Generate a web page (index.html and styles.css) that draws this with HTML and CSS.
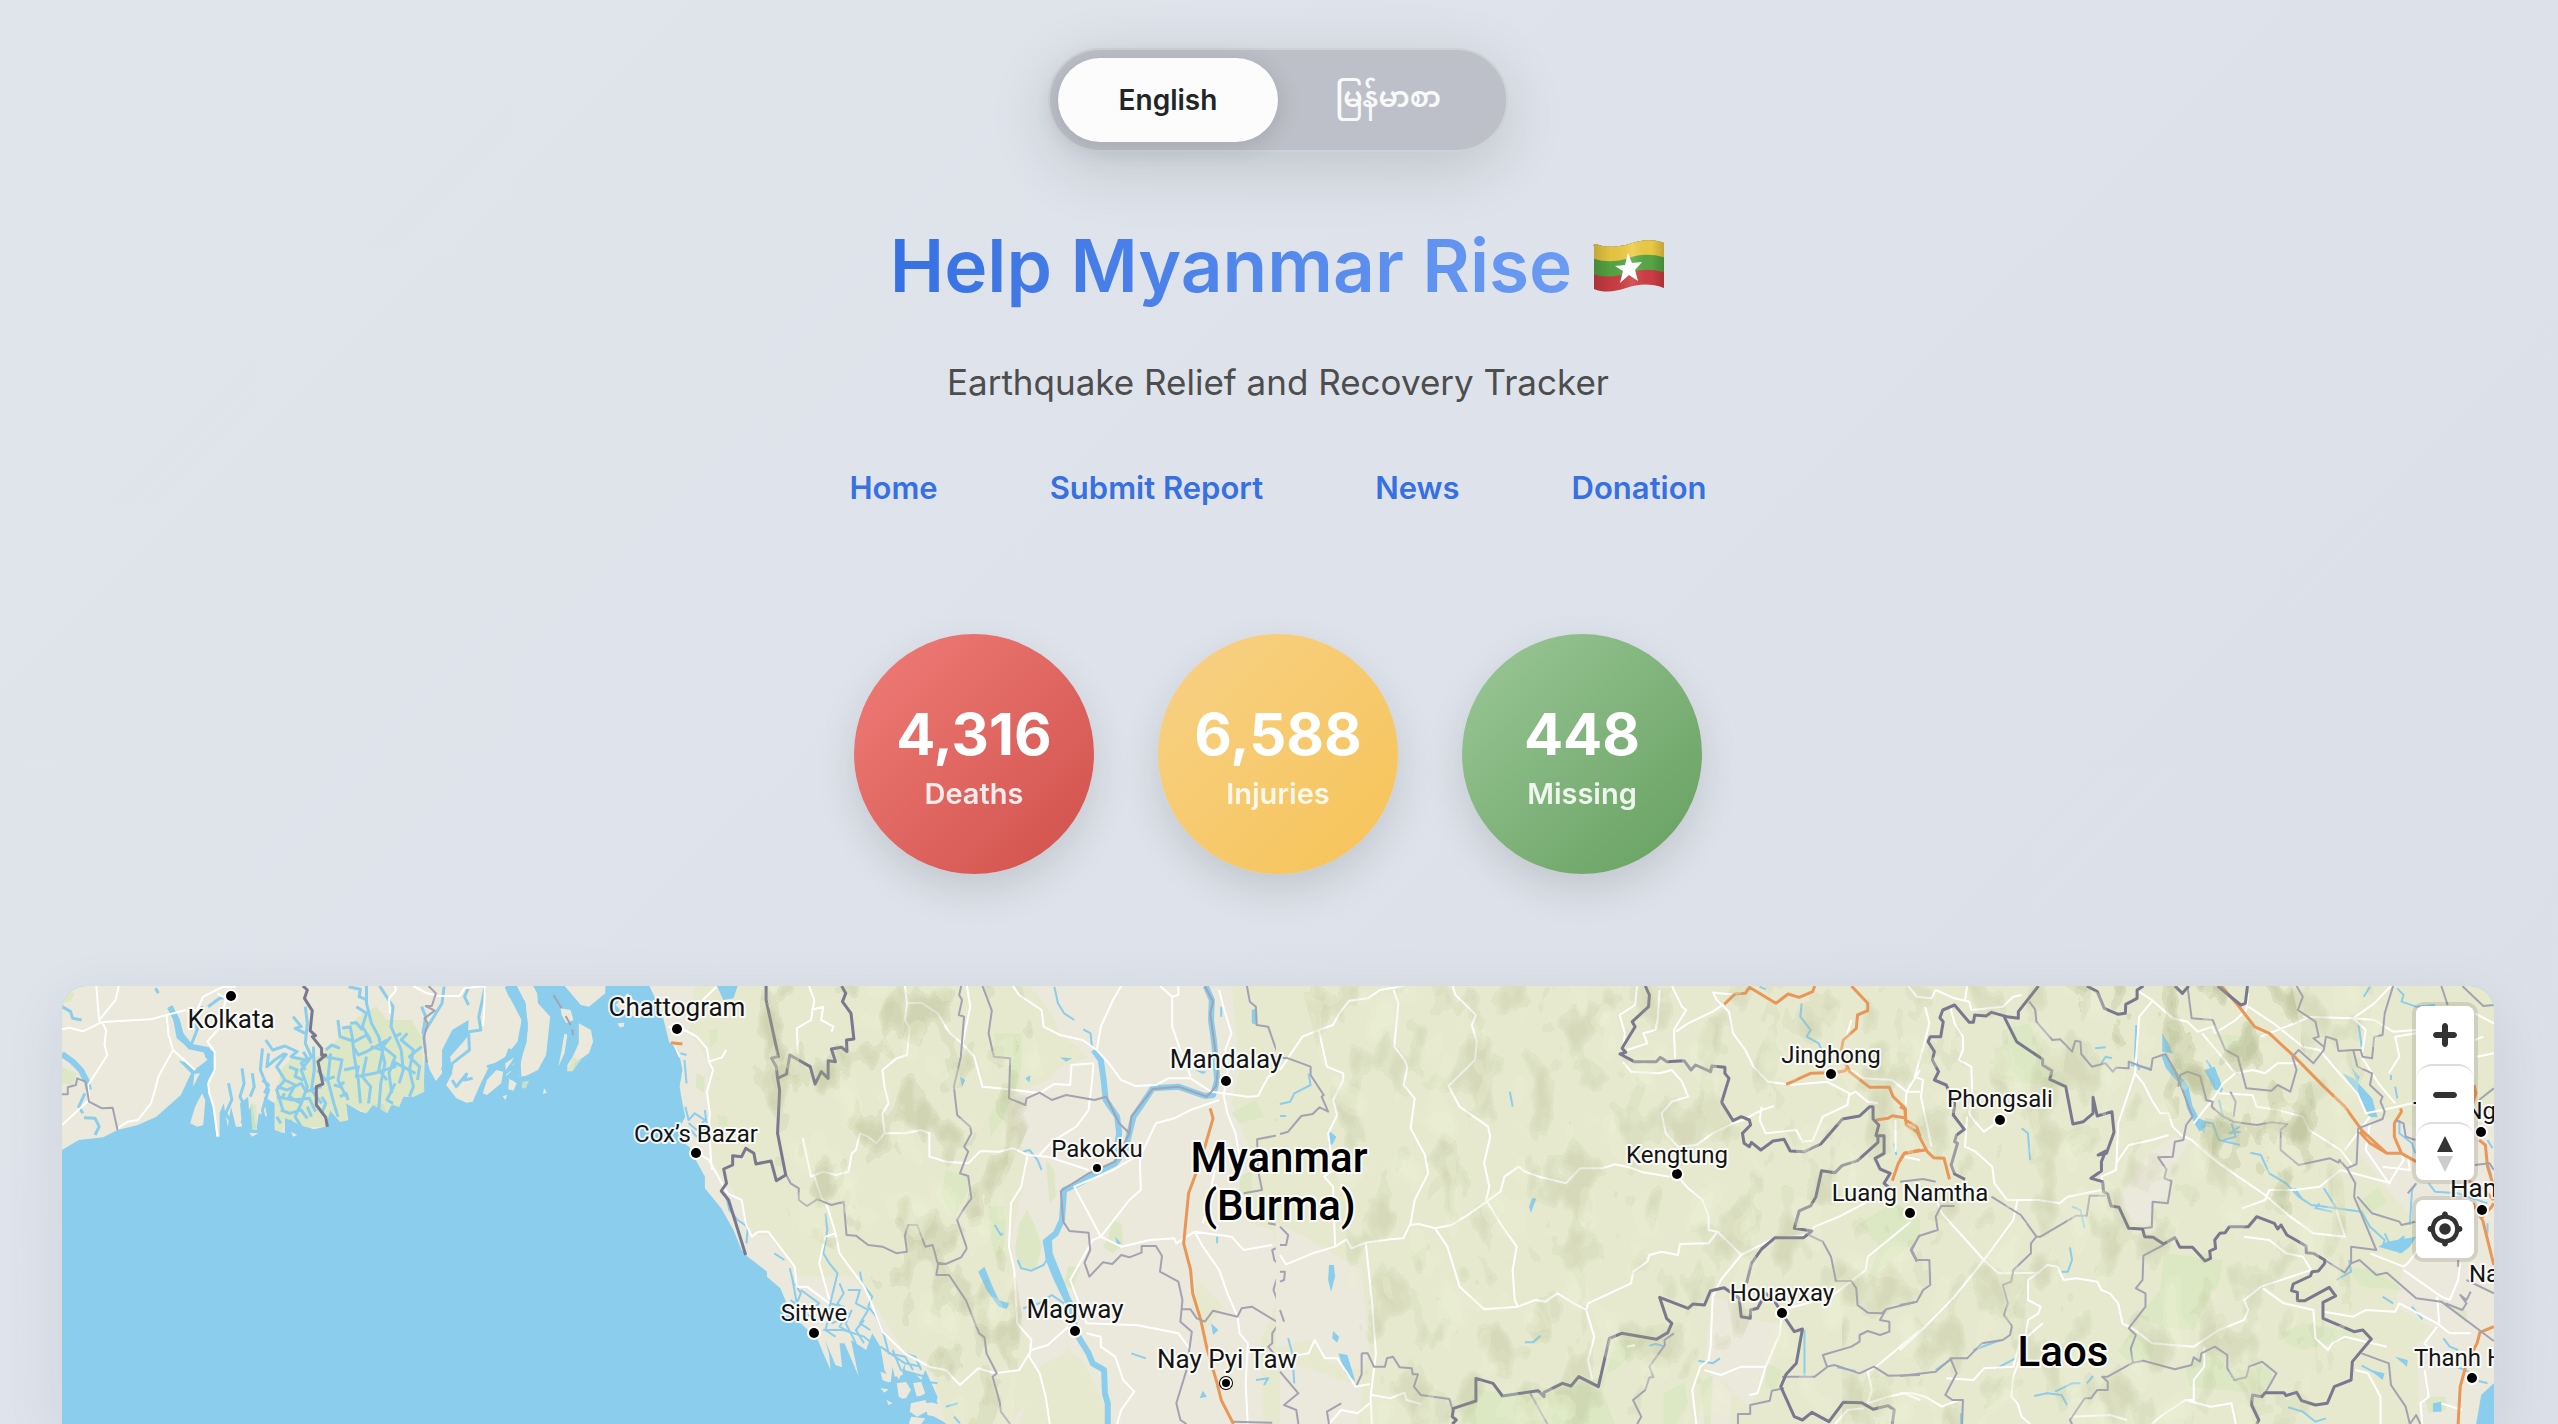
FILE: index.html
```html
<!DOCTYPE html>
<html lang="en">
<head>
<meta charset="utf-8">
<meta name="viewport" content="width=device-width, initial-scale=1">
<title>Help Myanmar Rise</title>
<link rel="stylesheet" href="styles.css">
</head>
<body>
<header class="hero">
  <div class="lang" role="group" aria-label="Language">
    <button class="lang-btn is-active" type="button" aria-pressed="true">English</button>
    <button class="lang-btn" type="button" aria-pressed="false" lang="my">မြန်မာစာ</button>
  </div>
  <h1 class="title"><span class="title-text">Help Myanmar Rise</span>
    <svg class="flag" viewBox="0 0 74 52" role="img" aria-label="Flag of Myanmar">
      <defs>
        <clipPath id="wave"><path d="M2 6C1 5 2 4 4 4C18 10 34 5 44 2C54 -1 66 0 72 3V48C58 43 46 44 34 48C22 52 12 53 2 49Z"/></clipPath>
        <linearGradient id="fold"><stop offset="0" stop-color="#000" stop-opacity=".2"/><stop offset=".25" stop-color="#000" stop-opacity=".05"/><stop offset=".55" stop-color="#fff" stop-opacity=".12"/><stop offset=".8" stop-color="#000" stop-opacity=".02"/><stop offset="1" stop-color="#000" stop-opacity=".22"/></linearGradient>
      </defs>
      <g clip-path="url(#wave)">
        <rect width="74" height="52" fill="#cf3e43"/>
        <path fill="#58a846" d="M0 0H74V33C62 29 50 29 40 32C26 37 12 38 0 34Z"/>
        <path fill="#efcc45" d="M0 0H74V18C62 14 50 14 40 17C26 22 12 23 0 18Z"/>
        <rect width="74" height="52" fill="url(#fold)"/>
      </g>
      <path fill="#fff" d="M36 13L40 23L50 22L43 30L46 41L37 35L28 43L31 31L23 26L33 25Z"/>
    </svg>
  </h1>
  <p class="subtitle">Earthquake Relief and Recovery Tracker</p>
  <nav class="nav">
    <a href="#home">Home</a>
    <a href="#report">Submit Report</a>
    <a href="#news">News</a>
    <a href="#donation">Donation</a>
  </nav>
</header>

<section class="stats" aria-label="Casualties">
  <div class="stat deaths"><strong>4,316</strong><span>Deaths</span></div>
  <div class="stat injuries"><strong>6,588</strong><span>Injuries</span></div>
  <div class="stat missing"><strong>448</strong><span>Missing</span></div>
</section>

<main class="map">
  <svg class="map-canvas" viewBox="0 0 2432 438" preserveAspectRatio="xMidYMin slice" role="img" aria-label="Map of Myanmar and its neighbours">
    <defs>
      <filter id="relief" x="0" y="0" width="100%" height="100%" color-interpolation-filters="sRGB">
        <feTurbulence type="fractalNoise" baseFrequency=".03 .018" numOctaves="3" seed="11"/>
        <feColorMatrix values="0 0 0 0 .66  0 0 0 0 .68  0 0 0 0 .5  3.4 0 0 0 -1.7"/>
        <feComponentTransfer><feFuncA type="discrete" tableValues="0 .14 .22 .3 .36"/></feComponentTransfer>
        <feComposite in2="SourceGraphic" operator="in"/>
      </filter>
      <filter id="relief-light" x="0" y="0" width="100%" height="100%" color-interpolation-filters="sRGB">
        <feTurbulence type="fractalNoise" baseFrequency=".03 .02" numOctaves="2" seed="4"/>
        <feColorMatrix values="0 0 0 0 .93  0 0 0 0 .94  0 0 0 0 .83  3 0 0 0 -1.5"/>
        <feComponentTransfer><feFuncA type="discrete" tableValues="0 .3 .5"/></feComponentTransfer>
        <feComposite in2="SourceGraphic" operator="in"/>
      </filter>
    </defs>

    <rect class="sea" width="2432" height="438"/>

    <!-- Ganges delta -->
    <g transform="translate(-22 -16) scale(.40816 .33333)">
      <path class="low" d="M54 40V540L95 510L155 502L190 480L240 465L285 440L345 375L370 310L350 285L340 272L355 276L378 300L410 270L400 245L365 235L335 205L325 140L316 112L322 106L335 150L345 190L370 225L412 235L430 250L428 300L412 330L412 370L425 410L432 500L440 500L440 430L450 400L460 470L468 410L480 470L495 470L490 400L510 380L512 420L520 400L530 480L536 430L556 440L548 380L575 400L575 480L600 490L600 440L630 460L670 478L700 470L710 420L735 455L755 450L750 400L785 425L800 430L815 405L840 400L850 430L862 400L880 410L890 380L915 380L940 365L943 250L955 300L970 333L985 310L985 240L1010 180L1050 150L1048 200L1005 260L1010 310L995 345L1020 385L1045 398L1060 395L1080 340L1100 290L1140 260L1170 215L1180 150L1150 80L1140 40Z"/>
      <path class="low" d="M1165 40L1190 100L1195 180L1185 240L1170 320L1190 318L1220 300L1240 255L1250 140L1220 100L1218 70L1205 40ZM1280 40L1325 105L1345 110L1385 70V40ZM1320 160L1350 180L1355 215L1345 250L1310 280L1305 304L1292 304L1292 285L1305 260L1320 220ZM1285 190L1292 195L1285 250L1270 290L1278 240ZM1275 115L1300 120L1307 150L1290 160L1278 135ZM1440 70L1470 110L1472 145L1430 130L1410 105ZM1415 160L1432 158L1430 170L1420 172ZM1118 300L1135 305L1130 340L1095 375L1085 370L1095 330ZM1150 325L1168 340L1160 362L1147 358ZM1140 280L1165 260L1158 300L1142 318ZM1133 378L1145 375L1140 390ZM1235 355L1242 368L1232 372ZM397 370L405 390L400 465L385 470L368 460L380 410ZM378 312L392 310L375 350ZM512 488L535 490L520 500ZM615 485L630 495L620 500Z"/>
      <path class="park" d="M825 110L850 150L910 150L935 200L942 365L915 380L890 378L880 412L862 405L850 430L815 405L800 430L750 400L752 452L735 455L712 420L700 470L650 472L600 445L592 490L577 478L577 400L590 300L620 260L680 260L720 220L745 180L790 130ZM515 400L530 405L532 480L520 480ZM1182 335L1198 332L1190 355L1180 355ZM1305 262L1325 270L1305 304L1292 300ZM54 290L90 310L80 345L54 340ZM54 60L85 70L75 95L54 98Z"/>
      <g class="creek delta">
        <path d="M800 48L800 100L812 160L830 200L845 280L835 340L830 420M832 48L865 110L860 170L885 240L890 300L880 340M775 110L800 130L790 170L810 210M730 150L735 200L770 215L800 195L812 220M740 175L760 170L765 200L770 260L780 330L785 400M700 260L740 270L730 330L750 380M712 250L705 330L720 400L730 440M650 110L655 160L650 220L665 260L640 300L655 350L640 400M620 140L640 170L625 175L650 190M545 235L540 300L560 360L545 420L555 480M553 210L570 240L600 228L630 245L615 260L650 270M605 250L580 290L600 330L580 360L595 420M560 250L556 290L575 270L600 250M670 230L672 300L665 360L690 400M600 330L625 345L610 380L640 400L625 440L640 470M810 230L840 240L830 300L850 330M860 200L840 230L870 260L855 310L862 370M900 190L885 210L915 240L905 300L915 350L905 380M935 230L905 260L930 290L925 330M870 340L850 390L865 400M800 260L790 320L810 350L805 400M495 295L500 340L490 380L505 420L495 460M462 340L470 390L455 430L470 460M520 310L525 350L515 380M545 330L560 345L550 370M580 380L620 390L660 385L675 425M590 420L612 430L640 420L655 445M580 350L605 360L640 340L652 365L690 350M745 300L780 290L775 320L820 310L870 290L865 275L920 310M735 380L750 370L755 390M770 235L780 255L800 245L830 225L850 210M680 300L700 330L722 320M756 50L785 58L782 80L800 90M760 160L775 158L790 180M700 240L715 225L735 235M650 300L640 280L655 265L645 245M610 290L630 300L625 320L645 330M690 380L700 400L690 430M870 200L885 190M720 345L735 350L745 335M580 440L590 460M655 410L665 440M612 450L618 465M600 370L590 385"/>
        <path d="M1050 52L1040 80L1050 105M1020 175L1015 210L990 240L1000 265L985 300M990 50L985 100L960 150L940 190L945 250M1090 55L1075 140L1080 180L1050 185L1052 240L1010 280L1005 310M1010 330L1020 350L1045 312L1040 330L1060 325M1095 290L1140 275L1150 240L1165 265L1140 310L1160 290L1155 330M54 110L75 125L80 145L102 150M110 370L95 410L105 430M108 443L135 445L145 470L135 495M283 55L290 70M370 225L385 180L380 130L400 110M412 110L440 85L460 82M935 110L945 140L938 190"/>
      </g>
      <g class="river"><path d="M1145 48L1155 75L1180 95L1188 160L1185 215L1170 270L1172 320M54 252L80 275L100 300L115 335L120 360M318 110L335 150L345 195L368 230L410 240L412 262"/></g>
      <g class="road">
        <path d="M54 178L72 173L105 184L125 172L152 156L272 148L310 135L358 120M138 48L145 155M193 48L185 90L145 150M152 156L162 180L158 225L165 255L118 345L120 390L54 465M310 135L315 195L326 240L380 300M326 240L290 320L283 355L272 400L240 450L215 455L190 475M445 52L400 80L385 120L360 125M445 52L480 50M435 70L455 85L450 120L435 180L410 215L428 245L428 300L412 340L415 370L425 410L435 500M870 48L872 62L855 85L858 130M915 48L945 68L975 78L1028 78L1040 55L1090 48L1088 130L1085 168M1500 48L1540 130L1545 200L1568 262"/>
      </g>
      <g class="province"><path d="M54 373H68V352L88 345L91 325L112 335L120 395L152 415L178 413L190 480M952 48L970 70L960 108L945 108L967 122L942 145L950 160L940 205L948 278M1258 75L1278 115M1288 138L1300 165M1304 178L1306 195"/></g>
      <g class="border"><path d="M644 48L655 60L648 85L667 122L662 182L675 197L667 200L690 235L690 255L700 255L681 275L693 342L677 350V405L700 442L704 470"/></g>
    </g>

    <!-- Western and central Myanmar -->
    <g transform="translate(598 -16) scale(.40816 .33333)">
      <path class="low" d="M-29 40L5 130L22 215L45 240L55 300L48 350L55 400L62 440L45 480L60 520L75 535L90 575L110 620V655L150 715L180 780L200 840L215 860L262 905V920L295 955L315 1015L340 1055L385 1105L400 1150L418 1200L414 1150L404 1110L430 1185L446 1192L440 1120L452 1120L486 1217L468 1110L505 1140L520 1090L540 1130L550 1200L565 1240L570 1190L585 1230L600 1180L640 1230L650 1200L680 1280L672 1340L705 1362V1380H1600V40Z"/>
      <path class="hill" d="M85 40L70 180L120 280L115 400L130 580L190 680L220 790L270 800L340 920L420 920L470 920L520 990L600 1150L660 1180L700 1362H860L930 1240L900 1100L870 1000L860 800L900 600L860 380L950 330L1000 260L960 130L900 40Z"/>
      <path class="hill" d="M1400 40L1420 300L1400 400L1440 520L1450 640L1400 740L1500 780L1520 900L1500 1040L1470 1110L1480 1362H1600V40ZM1320 930L1380 1010L1330 1090L1300 1000ZM880 1362L920 1200L1000 1140L1040 1180L1110 1362ZM760 80L900 40L960 170L1050 260L980 290L870 330Z"/>
      <path class="park" d="M120 180L140 178V210L125 235ZM90 310L110 320L108 370L88 350ZM140 435L165 440V470L145 465ZM820 190H885V280L878 360L840 370L855 400L840 450L810 500L805 440L855 340V260L820 250ZM805 710H845V790L840 850L820 860L810 790ZM880 760L900 720L920 770L935 830L920 900L880 890L870 840ZM945 570L965 600L970 680L955 700ZM1105 750L1130 760L1135 820L1110 850L1085 830L1100 800ZM1400 430L1460 390L1480 440L1420 460ZM1000 890L1030 890L1010 960L990 940ZM700 600L755 620V660L720 740L690 680ZM1420 620L1450 600L1450 680L1420 670Z"/>
      <g class="islands">
        <path d="M580 1240L600 1230L615 1260L600 1290L585 1280ZM620 1240L640 1235L650 1270L630 1285ZM615 1300L650 1290L660 1320L630 1340L612 1325ZM570 1190L590 1180L595 1215L575 1220ZM540 1255L560 1258L550 1268ZM650 1300L680 1295L675 1340L655 1335ZM600 1180L625 1180L622 1210L600 1205ZM615 1340L650 1345L640 1362H610ZM555 1290L570 1300L560 1305ZM540 1205L560 1215L565 1240L545 1230Z"/>
      </g>
      <g class="creek">
        <path d="M330 940L345 970L335 1000L360 1030L350 1050M345 960L390 1000L370 1020M400 1010L420 1020L405 1080L430 1100M415 1000L450 1010L440 1050L420 1060M440 940L450 970L435 1000L460 1030L440 1070L470 1090M460 960L490 960L480 1000L510 1020L490 1060L515 1080M400 1080L450 1080L500 1100L530 1130M490 905L495 940L520 980L510 1010L530 1040L550 1100L560 1150L600 1160L620 1200M540 1130L600 1180L640 1190M570 1140L590 1200L650 1220M600 1150L625 1160L640 1200M560 1240L620 1230L680 1240M590 1290L640 1280L680 1300M700 1310L730 1300M720 1340L735 1360M340 1010L320 990M350 1030L395 1050M470 1020L455 1060L480 1120M500 1050L480 1080L500 1120"/>
        <path d="M405 730L410 780L400 850L415 880L435 910L425 960L415 1010M318 895L325 930L335 1000M280 850L305 870M50 250L65 255M60 270L65 340M62 410L70 450L85 430L110 450L90 480L70 460M110 420L115 470L90 500L75 480M160 670L170 720L190 750L215 770L212 820"/>
        <path d="M966 50L975 100L990 130L1015 150M1037 178L1055 190L1058 230M890 545L905 540L925 570L935 600M820 765L835 795L840 790M1460 120L1455 150M1510 390L1520 420L1510 450L1530 440M1520 385L1568 370M1375 110L1375 140M1365 800L1365 820M1155 1150L1190 1165M1460 1230L1490 1225L1480 1245M1540 1110L1555 1160L1550 1230L1568 1240"/>
      </g>
      <g class="river">
        <path d="M1337 48L1352 90L1350 150L1358 220L1365 330L1355 375L1335 378L1270 350L1207 355L1180 405L1160 440L1150 490L1140 540L1115 580L1075 605L1035 635L990 660L985 750L970 790L945 815L952 860L965 900L985 960L1005 1000L1020 1090L1050 1150L1060 1180L1088 1200L1090 1270L1097 1300V1362M1062 240L1080 270L1087 330L1092 390L1120 440L1125 490L1115 560"/>
      </g>
      <g class="creek"><path d="M876 870L885 895L910 902L940 885L952 860M890 1015L930 1000L960 975L990 1000"/></g>
      <path class="sea" d="M140 48H190L180 85L155 90ZM735 320L748 330L740 350ZM980 262L1010 265L995 275ZM895 325L908 315L905 338ZM780 905L795 890L815 950L830 990L855 1000L850 1017L830 1010L800 960ZM940 815L960 800L962 850L995 950L1010 1000L995 1005L965 930L945 870ZM1350 1060L1368 1080L1355 1095ZM1330 1262L1340 1280L1322 1285ZM1115 800L1130 820L1120 825ZM1310 300L1340 305L1330 312ZM1450 120L1460 115L1462 165L1450 160Z"/>
      <g class="road">
        <path d="M20 170L60 180L90 200L115 235L120 275L152 262L162 240M120 275L130 300L115 365L122 430L120 470L125 570L128 600M105 90L138 50M365 48L378 90L370 150L335 175L338 250M370 120L400 110L395 150L425 170L420 185M600 48L605 100L600 150L612 175L605 255L580 265L545 300L550 350L560 400L545 430L550 490L530 520L510 500L490 490L480 540L470 550L462 605L430 615L400 605L370 620L350 505M550 490L600 490L640 480L660 490V560L700 575L755 580L785 543L830 545L865 535L900 555L950 560L1050 600M605 100L640 98L680 130L710 190L740 220L770 260L790 350L830 355L870 360L930 370L965 342L1005 345L1008 285L1062 280M752 48L760 110L745 200L740 225M865 48L880 75L935 120L940 170L980 195L1035 210L1070 240L1100 280L1130 330L1165 348L1215 345L1245 325L1300 325L1350 365L1380 370M1130 48L1110 90L1080 170L1070 240M1062 280L1058 340L1050 420L1020 470L960 515L930 555M1225 48L1255 80L1255 170L1275 240L1300 320M1270 48V75L1255 80M1370 60L1380 110L1390 150L1400 190L1385 240L1390 300L1390 340L1380 370L1440 380L1465 378L1490 320L1540 290L1560 240M1380 370L1390 430L1410 490L1420 560M1370 390L1300 420L1260 445L1215 460L1180 550L1110 600L1015 650L1080 800L1150 690L1178 660L1175 550"/>
        <path d="M1080 800L1060 810L1005 930L1045 1060L1170 1066L1230 1080L1270 1090L1300 1140M1080 800L1130 830L1200 810L1260 805L1265 820L1310 785L1370 795L1400 800L1430 840L1500 825M1310 785L1330 830L1370 900L1390 970L1415 1040L1420 1090L1440 1120L1435 1240L1440 1362M900 560L885 650L860 700L855 830L868 900L875 1060L910 1110L905 1160L930 1210L945 1280L955 1362M1000 1070L950 1125L910 1140L880 1200L820 1210L780 1195L735 1245L700 1200L660 1190L600 1150L545 1085L515 990L500 950L440 850L430 790L410 710L395 680L378 620M430 790L405 800L390 880L415 990M415 1000L360 950H335L330 890L265 785H240L225 800L210 760L200 690L165 670L120 570L100 555M1045 1090L1080 1100V1130L1115 1160L1135 1230L1162 1265L1130 1320L1120 1362M1360 600L1330 760"/>
      </g>
      <g class="motorway"><path d="M1348 415L1355 445L1335 530L1310 620L1295 670L1283 820L1300 900L1305 970L1325 1050L1340 1135L1365 1240L1375 1290L1405 1362M27 218L55 222"/></g>
      <g class="province">
        <path d="M738 48L733 75L740 90L732 135L745 140L737 260L720 350L728 435L760 470L763 490L745 530L755 545L735 610L755 618L763 685L745 715L728 750L752 835L738 862L700 882L680 878L668 825L650 830L630 765H608L600 797L605 845L580 850L545 830L510 825L480 797L457 795L450 695L420 705L385 688L360 708L340 690V655L320 640L308 612M682 878L677 915L708 915L750 992L782 1090L795 1102L800 1150L825 1210L815 1220L833 1300L835 1325L858 1362M790 48L813 122L805 190L818 260L858 265L855 385L895 405L898 385L930 368L960 390L995 375L1065 390L1093 380L1125 460L1150 490L1155 440L1207 357L1270 350L1340 380L1362 350L1367 300L1348 130L1355 95L1335 48M1150 490L1115 575L1050 610L982 663L988 755L1003 783L1050 788L1054 840L1040 878L1052 920L1085 877L1108 882L1130 855L1150 862L1180 848V828H1215L1230 858L1225 905L1270 935L1280 990L1275 1055L1303 1085L1290 1200L1265 1300L1275 1350L1290 1362M1280 1018H1300L1315 1045L1335 1055L1355 1022L1415 1040L1425 1015L1450 1010L1520 1062L1530 1050L1503 960L1510 930L1530 900L1505 870L1500 840L1535 820V790L1515 765L1490 760M1515 1062L1500 1090V1120L1490 1130L1550 1220L1562 1270L1530 1305L1568 1330M1438 48L1445 95L1460 110L1462 165L1490 170L1510 240L1550 270M1568 470L1545 488L1463 508L1465 600L1475 660L1430 670M1405 1355L1500 1358"/>
      </g>
      <g class="border"><path d="M260 48V90L290 260L273 265L285 290L288 325L310 312L318 255L368 290L380 342L395 305L412 325V272L430 275L420 237L445 232L458 245L457 210L475 207L468 130L447 95L455 70L445 48M288 325L293 360L288 490L308 615L285 632L272 573L235 582L230 550L210 535L200 560L178 557V585L156 597L163 640L150 663L168 690L210 855"/></g>
    </g>

    <!-- Shan highlands, Yunnan and western Laos -->
    <g transform="translate(1218 -16) scale(.40816 .33333)">
      <path class="hill" d="M-10 40H3000V1380H-10ZM"/>
      <path class="low" d="M1060 980L1110 1000L1130 1045L1230 1060L1200 1200L1150 1310L1080 1240L1040 1180ZM-10 760L60 800L200 900L220 1150L200 1200L120 1180L80 1110L-10 1130ZM0 1180L60 1190L200 1250L190 1362H0ZM1060 1210L1020 1362H1100L1110 1260Z"/>
      <path class="park" d="M480 1260L620 1280L700 1260L820 1200L900 1110L820 1110L790 1260L820 1362H440ZM1420 760L1500 700L1568 740V800L1500 870L1440 920L1470 830ZM1030 1240L1060 1215L1055 1362H1040ZM940 1270L990 1240L1000 1300L970 1362H940ZM1190 1180L1230 1200L1215 1260L1190 1250Z"/>
      <g class="creek"><path d="M563 365L570 410M1278 100L1275 140L1300 180L1290 200L1320 220L1330 250M600 1117L620 1117L638 1097M1025 1172L1060 1180L1078 1165M905 1127L920 1122L940 1128M1285 1080V1220M1365 1192L1410 1203M1505 520L1510 555M20 1105L30 1150L35 1240M70 310L75 345L35 370L25 395L0 402M0 438H15M1175 50L1190 58"/></g>
      <path class="sea" d="M118 480L138 500L128 525L118 520ZM618 685H628L615 728L610 710ZM120 885H132L135 920L125 965L118 930ZM130 1083L145 1100L140 1118L128 1105ZM143 1150L165 1155L185 1235L160 1210Z"/>
      <g class="road">
        <path d="M0 300L55 200L95 180L130 165L145 130L170 92L215 85L245 60L305 48M278 60L290 100L280 230L305 270L312 290L303 345L330 385L320 475L355 555L363 610L330 690L320 760L302 805L270 808L210 818L175 835L163 808L135 830L80 850L15 883L0 855M95 180L115 290L155 310L155 330L130 390L140 435L118 490L130 600L108 620L130 650L135 830M423 48L430 75L480 135L470 165L482 215L478 270L413 347L440 410L510 470L515 500L500 580L513 650L505 690L545 770L580 830L570 900L575 990L583 1010L500 1018L440 950L410 830L380 775L340 762L320 765M380 775L420 765L460 735L540 665L550 620L585 590L600 605L640 622L700 640L735 595L790 595L820 583L850 590L890 607L955 620M583 1010L625 990L650 995L680 970L720 1000L750 1020L755 1000L860 940L865 905L900 875L905 855L935 845L975 855L980 822L1050 820L1072 785L1050 780V740L1035 690L1000 655L972 615M750 1020L770 1100L755 1170L765 1230M210 818L225 990L235 1150L222 1280L225 1362M120 1362L150 1320L190 1330L220 1300M225 1275L270 1285L305 1268L310 1290L345 1302M850 1130L870 1125M0 1165L70 1150L85 1110L110 1165L140 1165L165 1210L185 1250L220 1242"/>
        <path d="M875 48L870 105L832 135L845 190L840 240M930 60L925 150L920 180L890 190L900 220L850 240M960 48L985 110L995 120L965 180L968 265M1090 100L1060 125L1000 160L970 185M1060 65L1070 90L1100 125L1110 190L1140 240L1160 290L1195 335L1240 342M1060 68L1130 75M840 275L860 305L930 310L960 300L985 335L1000 380L960 395L935 430L945 490L975 530L1020 525L1060 490L1110 460L1135 450L1180 420L1210 408M1180 410L1175 450L1190 490L1265 480L1280 515L1305 512L1330 440L1390 405L1395 370L1340 335L1250 345M1395 375L1410 365L1440 395L1465 400M1400 300L1430 325L1500 330L1535 365L1530 450M1568 365L1535 365L1568 300M1400 150L1390 190L1375 230M1508 450V545M1530 560L1568 570M1440 695L1370 740L1310 770L1290 795L1210 805L1130 855L1080 930L1060 980L1055 1130L1050 1170L1030 1190L1010 1260L1020 1362M1072 785L1110 830L1130 855M1545 755L1440 860L1435 900L1350 980L1230 1020L1225 1090L1190 1190L1170 1270L1150 1275M1040 1200L1080 1215L1130 1190H1190M1568 1080L1500 1150L1460 1190L1440 1205L1450 1260L1440 1300L1490 1280L1530 1270L1568 1290M1360 1362L1390 1320L1430 1315"/>
      </g>
      <g class="motorway"><path d="M1088 103L1115 72L1140 70L1150 52L1215 100L1245 72L1272 82L1305 65L1310 48M1400 48L1440 100V122L1415 135L1412 175L1380 210L1372 260L1390 290L1385 302L1365 307L1350 310M1240 343L1300 310L1345 308M1390 290L1395 305L1445 352H1493L1502 380L1532 415V450L1560 470L1568 500M1460 450L1490 445L1500 437L1530 443M1568 540L1530 550L1515 580L1500 632"/></g>
      <g class="province"><path d="M-15 262L20 265L75 290V315L107 375L102 380L118 425L97 412L80 432L52 438L20 485L0 492M0 770L20 795L15 825L0 825M0 905H12L10 930L0 935M0 1020L10 1055M0 1205L45 1270L10 1305L40 1320L45 1362M200 1150H215L230 1190H257L262 1165L277 1160L293 1192L323 1195L325 1213H338L328 1250L345 1275L415 1287L423 1320M200 1150V1213L188 1245M150 1300L115 1325L120 1362M613 1270L655 1362M965 1090L942 1110L943 1125L905 1190L915 1222H905L895 1260L865 1290L885 1340L875 1362M1295 795L1330 815L1350 860L1362 933H1400L1412 955L1415 1005L1440 1028L1475 1030L1485 1018L1470 1050L1493 1055V1085L1470 1095L1440 1083L1420 1095V1115L1400 1130L1330 1155L1340 1190L1358 1185L1420 1210L1455 1190L1490 1217L1568 1215M1485 1018L1560 995M1340 1192L1310 1220H1230M1235 1255L1205 1262L1200 1292L1152 1305V1332H1122V1362M1568 795L1545 840L1560 875"/></g>
      <g class="border"><path d="M895 48L905 75L903 110L863 155L870 170L838 235L847 247L833 252L868 275H922L932 262L948 275L990 272L1007 300L1018 285L1055 305L1058 288L1090 292V310L1100 325L1082 397L1110 452L1130 440L1150 450L1153 465L1133 490L1137 520L1150 530L1155 517L1178 540L1208 513L1235 508L1250 543L1285 545L1325 522L1378 447L1420 438L1445 410H1453V447L1467 465L1460 497H1480V550L1458 565L1470 597L1495 610L1480 640L1500 660M1465 500V517L1415 572L1377 587L1360 608L1327 602L1313 680L1300 708L1272 723L1260 775L1303 783L1283 803H1213L1180 837L1155 880L1143 940M422 1362L432 1350L422 1340L425 1315L480 1293V1225L522 1240L545 1278L632 1262L647 1280V1267L692 1240L713 1248L732 1220L780 1250L807 1105L837 1090L922 1108L950 1088L960 1060L947 1045L930 982L1000 1015L1012 1002L1040 1005L1055 962L1088 953L1125 985L1130 1040L1152 1045L1153 1020L1170 1015L1190 970L1210 990L1235 1040L1260 1085L1280 1077L1265 1180L1240 1213L1227 1250L1260 1340L1280 1350L1303 1327L1345 1355L1380 1297L1425 1298L1453 1318L1490 1307L1505 1320L1500 1362"/></g>
    </g>

    <!-- Laos and northern Vietnam -->
    <g transform="translate(1838 -16) scale(.41964 .33333)">
      <path class="low" d="M545 640L600 540L650 500L690 510L640 620V680L600 700V760H560L520 690ZM1090 470L1150 440L1240 480L1420 420V1362H1240L1230 1120L1280 1080L1180 1010L1200 880L1240 860L1230 760L1150 640L1090 540Z"/>
      <path class="park" d="M270 170L310 160L340 270L400 340L360 350L250 330L215 280ZM630 850L770 870L760 940L720 1020L700 1080L620 1070L570 1040L620 960ZM520 1140L550 1090L605 1120L600 1170L540 1170ZM910 1090L960 1060L1060 1080L1100 1100L960 1140L920 1120ZM680 1190L740 1140L800 1220L880 1180L890 1240L850 1270L690 1250ZM1090 700L1140 650L1160 700L1100 740ZM740 190L820 200L800 260ZM1060 890L1130 900L1200 960L1100 950ZM1250 1280H1300V1320L1260 1330ZM1290 990L1350 1020L1350 1060Z"/>
      <path class="sea" d="M1415 1240L1385 1275L1373 1362H1425ZM1270 1300L1290 1295L1290 1325L1270 1325ZM1055 310L1080 325L1100 350L1125 385L1138 442L1118 440L1100 390ZM1075 290L1095 320L1090 340ZM1140 830L1160 815L1230 800L1215 830L1195 850ZM725 300L750 290L770 360L750 360ZM625 190L640 220L650 250L625 245ZM705 440L730 455L725 495ZM1120 1200L1155 1210L1150 1230ZM1180 1160L1210 1170L1208 1190Z"/>
      <g class="creek"><path d="M563 165L560 260L570 300M465 235L490 232M480 280L490 260L505 265M550 285L595 295M730 270L760 330L765 370M760 390L770 440L790 450M720 455L745 460L760 510L810 525M790 460L800 500L770 510M810 470L785 490L812 485M835 548L860 555L880 610L920 640L950 680L980 705L1040 715L1100 725L1120 770L1155 810L1150 830M940 655L960 690M1010 655L1040 715M1000 700L990 715L1030 725M1155 790L1170 830L1200 800L1190 850M1215 765L1220 660L1230 640M1260 640L1275 665L1330 670M290 475L305 490L310 570M410 710L430 720L440 775M405 832L410 870L400 905L385 905M230 1195L275 1165M320 1278L350 1270L385 1275L398 1305M370 1265L410 1240L430 1240M445 1240L460 1218M1185 55L1200 75L1195 95L1230 110L1275 105M1120 50L1105 80M1092 155L1100 230M1170 315V330M1180 350L1185 385M1070 870L1075 905L1040 930M1150 980L1175 1000M1220 1010L1245 1048M1295 1105L1310 1130L1330 1140M1325 1190L1355 1205M1370 1230L1400 1240M925 1312L960 1325L990 1355L1015 1345M1100 1187L1150 1220M1190 450V490L1220 520L1228 550M1400 580L1410 620M1400 760V790M1330 670L1400 700M1400 510L1412 535"/></g>
      <g class="river"><path d="M630 255L640 290L660 320L680 350L690 410L710 460L720 480"/></g>
      <g class="creek"><path d="M85 1200L125 1165M175 1140L240 1110M145 1362V1330"/></g>
      <g class="road">
        <path d="M20 48L40 80L75 85L85 60L130 85L165 95L170 120L245 110L270 80L290 75M160 48L155 90M60 110L70 160L60 210L40 300L35 320L55 330L50 380L75 530M120 110L130 160L150 200V240L140 270L170 290L172 360L165 430L175 450L200 485L240 450M160 440L155 530L180 545L220 590L225 640L255 690L330 690L380 700L400 680L480 660M280 690L270 750L200 870L100 730L90 700M200 870L130 980L60 1070L0 1140M200 870L235 910L330 908L350 885L375 890L390 930L420 925L470 935L480 960L500 970L520 1000L530 1060L560 1080L600 1120L650 1125L700 1130L760 1080L820 1050L830 1020L820 990L860 950L980 900L960 860L920 850L880 810L820 800M865 955L915 1000L985 1020L990 1105L1020 1140L1030 1120L1060 1100L1160 1130M330 908L305 930L305 990L335 1010L330 1030L305 1050L295 1130L270 1220L265 1280L280 1300L290 1340L310 1362M725 1130V1190L700 1230V1290L680 1290L620 1340L600 1362M680 1290L740 1310L790 1300L800 1362M405 1340L500 1335L540 1350M0 1270H30L60 1280L100 1310L140 1290M110 1225L175 1230L200 1195L270 1190L285 1120L340 1060"/>
        <path d="M570 65L600 90L650 145L685 155L710 185L745 170L750 190L800 150L825 120L830 70M600 95L570 140L560 310L520 460L515 600L480 620L485 640M560 310L580 340L600 390L620 430H640L650 470L670 495L695 510L730 550L760 580L870 675L930 740L985 790L1060 800L1040 720M515 580L545 525L600 510L640 495M700 460L750 380L770 340L800 310L840 300L870 310L900 280H950M720 190L780 280L800 310M760 370L840 375L850 410L900 420L960 440L975 480L1050 540L1080 590M815 715L870 690L880 660L940 660L1000 650L1050 600L1080 610L1170 640M830 110L890 160L960 230L1000 240L1040 300L1090 370L1110 430L1150 420L1220 400M960 140L1080 145L1130 100L1170 48M1080 145L1110 180L1100 260L1140 340L1180 400M980 140L860 200M1080 145L1130 150L1175 185L1230 180M1120 460L1110 540L1165 640L1200 570L1195 550M1120 440L1060 540M1150 590L1215 600L1210 560M1120 850L1200 890L1210 880L1240 830M1200 900L1290 980L1310 990L1330 930L1335 880M1010 1025L1080 1040L1110 1020L1180 1025L1190 1000L1250 1040L1280 1060L1310 1090L1360 1090M1285 1060L1280 980M1280 1070L1250 1120L1270 1150M1250 1200L1260 1280L1240 1300L1245 1362M1290 1300L1340 1320M1085 1200L1115 1210L1145 1280V1362M1370 130L1415 160M1375 260L1415 250M1390 200L1370 210M1230 190L1180 200L1190 260L1165 310"/>
      </g>
      <g class="motorway"><path d="M765 48L805 105L845 170L880 190L940 260L1010 350L1060 410L1100 480L1160 550H1195L1230 575M1095 485L1120 520L1160 550M1195 550L1178 500V460L1195 425L1193 415M0 410L12 418L15 465L40 485L65 545L80 563L105 565L118 628M0 570L10 550L60 540M1368 345L1372 370L1365 400M1380 510L1395 525L1400 590L1415 650M1365 700L1385 745L1410 710L1415 700M1388 748L1415 885M1415 1070L1382 1087L1375 1120L1350 1180L1335 1250L1330 1362M1350 630L1385 650L1415 690"/></g>
      <g class="province"><path d="M308 95L322 118L325 155L363 210L382 208L410 245L418 212L430 215L432 252L457 290L490 280L507 305L515 293L545 295V275L598 300L602 265L632 252L655 300L697 440L682 465L675 510L655 515L650 560L615 562L635 598L630 625L647 633L638 700L602 695L600 772L580 775M663 350L668 315L685 305L715 318L730 390L745 395L743 410L770 440L795 455L850 465L885 457L922 462L907 480V540L950 585L1025 565L1045 578L1047 570L1065 595L1088 582L1092 475L1150 447L1155 425L1145 395L1150 380L1120 345L1125 310L1090 290L1080 240L1045 243L1040 210L1015 200L1010 240L985 280L950 240L935 260L945 300L930 365L900 345L885 362L825 355L805 260L775 240L745 150L695 145L685 48M787 365L800 395L795 440M1010 230L985 205L998 200L990 155L948 120L960 80L945 48M1065 595L1085 640L1082 680L1135 840L1075 830V880L1060 908L1012 870M1090 680L1125 730L1190 755L1195 765L1228 755M1075 880L1095 870L1135 915L1160 908L1230 985L1290 995L1415 1113M1080 240H1098L1102 260L1125 265L1130 200L1150 195L1155 130L1175 48M1340 48L1390 108L1415 105M1290 48L1305 105M1350 930L1415 970M1300 1000L1340 1020L1350 1000L1335 975L1350 990L1360 965M1330 870V890M1210 670L1230 640M1180 450L1200 460L1205 500L1228 510M1380 390L1415 355M1370 585L1405 580L1415 600M218 680L288 735L325 800H335L420 737H445L452 677H490M325 800L312 820V850L270 900L265 935L245 945L257 1000L248 1035L267 1068L262 1095L245 1110L195 1120L160 1165H120L135 1210L108 1275L125 1290L150 1290L148 1362M120 1168L85 1205L0 1218M628 825L580 857L578 930L562 955L585 970V1010L545 1075L562 1095L550 1135L555 1178L495 1220H482L495 1235V1260H470L455 1285H440L405 1350L410 1362M555 1178L580 1172L655 1198L695 1185L700 1162L715 1175L718 1150L750 1130L780 1155V1195L797 1230L825 1222L832 1190L863 1175L897 1210L870 1270M1100 1150L1165 1180L1170 1245L1205 1310L1215 1362L1230 1335L1240 1362M0 635L55 627L85 635M130 708H98L85 740L90 780L45 798L28 840L40 870H70L72 945L55 960L40 995L0 1005"/></g>
      <g class="border"><path d="M330 48L282 125V145L255 140L218 127L205 138L178 135L175 157H165L130 105L102 120L95 143L103 155L97 200H72L67 215L82 245L77 270L92 305L82 330L110 345L130 400L127 435L153 478L135 495L130 515L137 520L122 585L130 612L155 628M248 140L278 215L340 268V285L362 302L357 328L395 350L412 462L437 455L460 430V382L470 438L505 425L510 487L492 550L472 555L490 543L480 575V603L455 625L483 635L485 665L495 672L503 708L522 712L545 775L578 777L583 800L603 802L628 822L655 803L667 832H697L727 873L740 865L738 843L752 835L750 810L762 790L775 788L785 770H830L850 740L892 760L900 777L908 765L922 795L968 828V848L985 850L1012 870V880L997 903L982 905L978 918L937 942L933 962L947 967V992H965L1023 952L1038 978L1008 997V1045L1082 1085L1103 1080L1123 1107L1078 1175L1075 1230L1035 1250L1018 1300L990 1305L957 1292L945 1267L920 1277L915 1268H870L862 1280L840 1275L838 1305L855 1350L850 1362M445 48L470 65L487 115L520 133L537 130L538 103L565 85V60L580 48M655 48L673 70L688 48M757 48L812 105L823 100L828 48"/></g>
    </g>

    <!-- Hill shading -->
    <path filter="url(#relief)" d="M700 0L690 90L730 240L800 280L900 438H950L960 330L940 200L985 100L960 0Z"/>
    <path opacity=".7" filter="url(#relief)" d="M1240 0L1270 120L1300 438H1640L1690 330H1780V438H2250L2290 320L2280 180L2330 0Z"/>
    <path filter="url(#relief)" d="M1990 0H2230L2260 150L2230 230L2140 160L2080 80Z"/>
    <path filter="url(#relief-light)" d="M700 0L690 90L730 240L800 280L900 438H950L960 330L940 200L985 100L960 0ZM1240 0L1270 120L1300 438H2250L2290 320L2280 180L2330 0Z"/>

    <g class="dots">
      <circle cx="169" cy="10" r="5"/><circle cx="615" cy="43" r="5"/><circle cx="634" cy="167" r="5"/><circle cx="752" cy="347" r="5"/><circle cx="1035" cy="182" r="4"/><circle cx="1164" cy="95" r="5"/><circle cx="1013" cy="345" r="5"/><circle cx="1769" cy="88" r="5"/><circle cx="1615" cy="188" r="5"/><circle cx="1938" cy="134" r="5"/><circle cx="1848" cy="227" r="5"/><circle cx="1720" cy="327" r="5"/><circle cx="2410" cy="392" r="5"/><circle cx="2420" cy="224" r="5"/><circle cx="2419" cy="146" r="5"/>
    </g>
    <g class="capital"><circle cx="1164" cy="397" r="6"/><circle class="pip" cx="1164" cy="397" r="3"/></g>

    <g class="labels">
      <text class="city large" x="169" y="42">Kolkata</text>
      <text class="city large" x="615" y="30">Chattogram</text>
      <text class="city" x="634" y="156">Cox’s Bazar</text>
      <text class="city" x="752" y="335">Sittwe</text>
      <text class="city" x="1035" y="171">Pakokku</text>
      <text class="city large" x="1164" y="82">Mandalay</text>
      <text class="city large" x="1013" y="332">Magway</text>
      <text class="city large" x="1165" y="382">Nay Pyi Taw</text>
      <text class="city" x="1769" y="77">Jinghong</text>
      <text class="city" x="1615" y="177">Kengtung</text>
      <text class="city" x="1938" y="121">Phongsali</text>
      <text class="city" x="1848" y="215">Luang Namtha</text>
      <text class="city" x="1720" y="315">Houayxay</text>
      <text class="city edge" x="2352" y="380">Thanh Hóa</text>
      <text class="city large edge" x="2388" y="211">Hanoi</text>
      <text class="city edge" x="2351" y="133">Thái Nguyên</text>
      <text class="city edge" x="2407" y="296">Nam Định</text>
      <text class="country" x="1217" y="186">Myanmar</text>
      <text class="country" x="1217" y="234">(Burma)</text>
      <text class="country" x="2001" y="380">Laos</text>
    </g>
  </svg>

  <div class="controls">
    <div class="control-group">
      <button type="button" aria-label="Zoom in"><svg viewBox="0 0 29 29"><path d="M14.5 8.500c-.75 0-1.500.75-1.500 1.500v3h-3c-.75 0-1.500.75-1.500 1.500S9.250 16 10 16h3v3c0 .75.75 1.500 1.500 1.500S16 19.750 16 19v-3h3c.75 0 1.500-.75 1.500-1.500S19.750 13 19 13h-3v-3c0-.75-.75-1.500-1.500-1.500z"/></svg></button>
      <button type="button" aria-label="Zoom out"><svg viewBox="0 0 29 29"><path d="M10 13c-.75 0-1.500.75-1.500 1.500S9.250 16 10 16h9c.75 0 1.500-.75 1.500-1.500S19.750 13 19 13h-9z"/></svg></button>
      <button type="button" aria-label="Reset bearing to north"><svg viewBox="0 0 29 29"><path d="M10.5 14l4-8 4 8h-8z"/><path class="south" d="M10.5 16l4 8 4-8h-8z"/></svg></button>
    </div>
    <div class="control-group">
      <button type="button" aria-label="Find my location"><svg viewBox="0 0 20 20"><path fill-rule="evenodd" d="M10 4C9 4 9 5 9 5v.1A5 5 0 0 0 5.100 9H5s-1 0-1 1 1 1 1 1h.1A5 5 0 0 0 9 14.900v.1s0 1 1 1 1-1 1-1v-.1a5 5 0 0 0 3.900-3.900h.1s1 0 1-1-1-1-1-1h-.1A5 5 0 0 0 11 5.100V5s0-1-1-1zm0 2.500a3.500 3.500 0 1 1 0 7 3.500 3.500 0 1 1 0-7z"/><circle cx="10" cy="10" r="2"/></svg></button>
    </div>
  </div>
</main>
</body>
</html>
```
FILE: styles.css
```css
* { box-sizing: border-box; }

body {
  margin: 0;
  min-height: 100vh;
  display: flex;
  flex-direction: column;
  padding: 48px 64px 0 62px;
  overflow-x: hidden;
  background: linear-gradient(135deg, #e0e5ec 0%, #dee3eb 50%, #dbdfe8 100%);
  color: #4d4d4d;
  font-family: Inter, "Noto Sans", sans-serif;
}

.hero {
  display: flex;
  flex-direction: column;
  align-items: center;
}

.lang {
  display: flex;
  padding: 8px;
  border: 2px solid #cfd1d5;
  border-radius: 52px;
  background: #bdc0c8;
  box-shadow: 0 16px 64px rgba(0, 0, 0, .14);
}

.lang-btn {
  width: 220px;
  height: 84px;
  border: 0;
  border-radius: 42px;
  background: transparent;
  color: #f8f9fa;
  font: 600 28px Inter, "Noto Sans Myanmar", "Noto Sans", sans-serif;
}

.lang-btn.is-active {
  background: #fcfcfc;
  color: #212529;
  box-shadow: 0 4px 24px rgba(0, 0, 0, .14);
}

.title {
  display: flex;
  align-items: center;
  gap: 20px;
  margin: 66px 0 0;
  font-size: 73px;
  font-weight: 600;
  line-height: 96px;
}

.title-text {
  background: linear-gradient(90deg, #3670e2, #6b9bf3);
  -webkit-background-clip: text;
  background-clip: text;
  color: transparent;
}

.flag { width: 74px; height: 52px; }

.subtitle {
  margin: 44px 0 0;
  font-size: 35px;
  line-height: 48px;
}

.nav {
  display: flex;
  gap: 112px;
  margin-top: 62px;
}

.nav a {
  color: #3670e2;
  font-size: 31px;
  font-weight: 600;
  line-height: 40px;
  text-decoration: none;
}

.stats {
  display: flex;
  justify-content: center;
  gap: 64px;
  margin: 126px 0 112px;
}

.stat {
  display: flex;
  flex-direction: column;
  align-items: center;
  justify-content: center;
  width: 240px;
  height: 240px;
  padding-top: 8px;
  border-radius: 50%;
  color: #fff;
  box-shadow: 0 16px 40px rgba(0, 0, 0, .12);
}

.stat strong { font-size: 58px; font-weight: 700; line-height: 64px; }
.stat span { font-size: 29px; font-weight: 600; line-height: 40px; opacity: .88; margin-top: 8px; }

.deaths { background: linear-gradient(135deg, #f07d78, #d0504b); }
.injuries { background: linear-gradient(135deg, #f7d186, #f6c357); }
.missing { background: linear-gradient(135deg, #9bc898, #669f5f); }

.map {
  position: relative;
  flex: 1 0 438px;
  overflow: hidden;
  border-radius: 24px 24px 0 0;
  background: #8bcdec;
  box-shadow: 0 16px 64px rgba(0, 0, 0, .08);
}

.map-canvas {
  position: absolute;
  inset: 0;
  width: 100%;
  height: 100%;
}

.map-canvas path { vector-effect: non-scaling-stroke; stroke-linejoin: round; }
.sea { fill: #8bcdec; }
.low, .islands { fill: #ebe9db; }
.hill { fill: #e6e9ce; }
.park { fill: #d9e6c1; opacity: .8; }
.creek, .river, .road, .motorway, .province, .border { fill: none; }
.creek { stroke: #8bcdec; stroke-width: 2; }
.delta { stroke-width: 3; }
.river { stroke: #8bcdec; stroke-width: 6; }
.road { stroke: #fff; stroke-width: 2; }
.motorway { stroke: #ea9657; stroke-width: 3; }
.province { stroke: #a3a2b3; stroke-width: 2; }
.border { stroke: #79788f; stroke-width: 3; }

.dots circle, .capital circle { stroke: #fff; stroke-width: 4; paint-order: stroke; }
.capital circle { fill: #fff; stroke: #000; stroke-width: 2; }
.capital .pip { fill: #000; }

.labels {
  fill: #141414;
  stroke: rgba(255, 255, 255, .85);
  stroke-width: 4;
  stroke-linejoin: round;
  paint-order: stroke;
  text-anchor: middle;
  font-family: Roboto, sans-serif;
}

.city { font-size: 24px; }
.large { font-size: 26px; }
.edge { text-anchor: start; }
.country { font-size: 42px; font-weight: 500; fill: #000; }

.controls {
  position: absolute;
  top: 20px;
  right: 20px;
  display: grid;
  gap: 20px;
}

.control-group {
  border-radius: 8px;
  background: #fff;
  box-shadow: 0 0 0 4px rgba(0, 0, 0, .1);
}

.control-group button {
  display: block;
  width: 58px;
  height: 58px;
  padding: 0;
  border: 0;
  border-radius: 8px;
  background: #fff;
  fill: #333;
}

.control-group button + button { border-top: 2px solid #ddd; border-radius: 16px 16px 8px 8px; }
.control-group svg { display: block; width: 58px; height: 58px; }
.control-group .south { fill: #ccc; }
```
